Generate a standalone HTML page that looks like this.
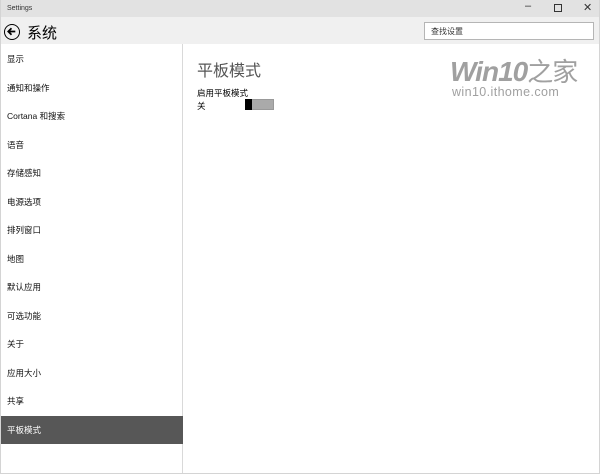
<!DOCTYPE html>
<html><head><meta charset="utf-8"><style>
*{margin:0;padding:0;box-sizing:border-box}
body{width:600px;height:474px;overflow:hidden;background:#fff;font-family:"Liberation Sans","Noto Sans CJK SC",sans-serif;color:#000;position:relative}
.frame{position:absolute;left:0;top:0;width:600px;height:474px;border:1px solid #d4d4d4;border-top:none}
.title{position:absolute;left:0;top:0;width:600px;height:17px;background:#e2e2e2;font-size:7px;color:#333;padding:5px 0 0 7px}
.ctl{position:absolute;top:2px;font-size:11px;color:#333}
.head{position:absolute;left:0;top:17px;width:600px;height:27px;background:#f0f0f0}
.back{position:absolute;left:4px;top:24px;width:16px;height:16px;border:1.6px solid #000;border-radius:50%}
.h1{position:absolute;left:27px;top:22px;font-size:15px}
.search{position:absolute;left:424px;top:22px;width:170px;height:18px;background:#fff;border:1px solid #b5b5b5;font-size:8px;padding:3px 0 0 6px;color:#333}
.side{position:absolute;left:0;top:44px;width:183px;height:430px;border-right:1px solid #d9d9d9}
.item{position:absolute;left:7px;font-size:8.5px;color:#111}
.sel{position:absolute;left:1px;top:416px;width:182px;height:28px;background:#575757}
</style></head><body>
<div class="title">Settings</div>
<div class="ctl" style="left:525px;top:0px">–</div>
<div style="position:absolute;left:554px;top:4px;width:8px;height:8px;border:1px solid #333"></div>
<div class="ctl" style="left:583px;top:1px">✕</div>
<div class="head"></div>
<div class="back"><svg width="13" height="13" viewBox="0 0 12 12" style="position:absolute;left:0;top:0"><path d="M9.5 6H3M6 3L3 6l3 3" stroke="#000" stroke-width="1.6" fill="none"/></svg></div>
<div class="h1">系统</div>
<div class="search">查找设置</div>
<div class="side"></div>
<div class="sel"></div>
<div class="item" style="top:53px">显示</div>
<div class="item" style="top:82px">通知和操作</div>
<div class="item" style="top:110px">Cortana 和搜索</div>
<div class="item" style="top:139px">语音</div>
<div class="item" style="top:167px">存储感知</div>
<div class="item" style="top:196px">电源选项</div>
<div class="item" style="top:224px">排列窗口</div>
<div class="item" style="top:253px">地图</div>
<div class="item" style="top:281px">默认应用</div>
<div class="item" style="top:310px">可选功能</div>
<div class="item" style="top:338px">关于</div>
<div class="item" style="top:367px">应用大小</div>
<div class="item" style="top:395px">共享</div>
<div class="item" style="top:424px;color:#fff">平板模式</div>
<div style="position:absolute;left:197px;top:57px;font-size:16px;color:#555">平板模式</div>
<div style="position:absolute;left:197px;top:87px;font-size:8.5px">启用平板模式</div>
<div style="position:absolute;left:197px;top:100px;font-size:8.5px">关</div>
<div style="position:absolute;left:245px;top:99px;width:29px;height:11px;border:1px solid #999;background:#aaa"></div>
<div style="position:absolute;left:245px;top:99px;width:7px;height:11px;background:#000"></div>
<div style="position:absolute;left:450px;top:52px;font-size:28px;font-weight:bold;font-style:italic;color:#a0a0a0;letter-spacing:-1px;white-space:nowrap">Win10<span style="font-style:normal;font-weight:normal;font-size:26px">之家</span></div>
<div style="position:absolute;left:452px;top:85px;font-size:12.5px;color:#a0a0a0;letter-spacing:0.4px">win10.ithome.com</div>
<div class="frame"></div>
</body></html>
